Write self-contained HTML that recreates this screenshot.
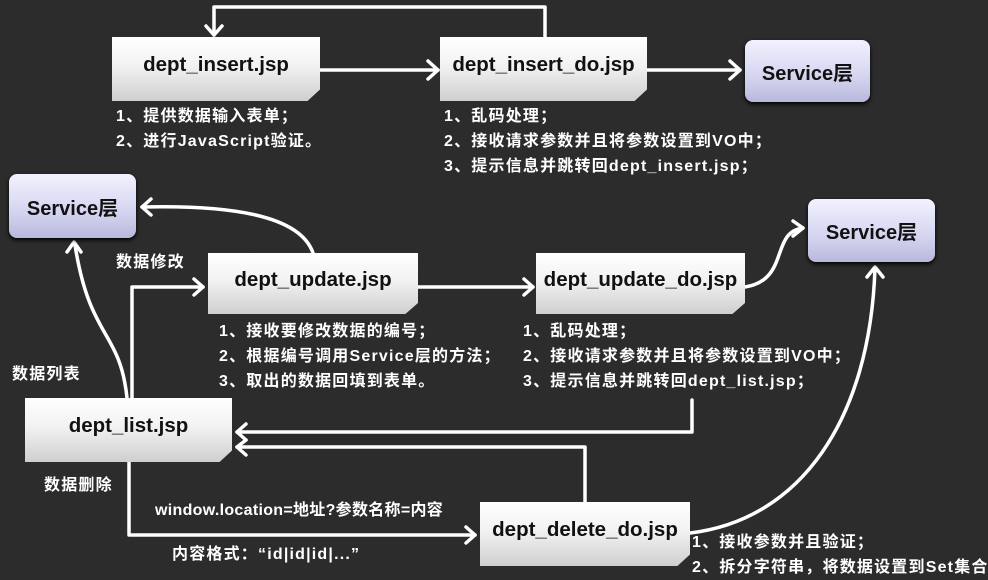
<!DOCTYPE html>
<html><head><meta charset="utf-8"><style>
body{margin:0;width:988px;height:579px;overflow:hidden;background:#2c2c2c;font-family:"Liberation Sans","Noto Sans CJK SC",sans-serif;position:relative}
.b{position:absolute;background:linear-gradient(#ffffff,#f2f2f2 45%,#cfcfcf);color:#111;font-weight:bold;font-size:20.5px;display:flex;align-items:center;justify-content:center;box-sizing:border-box;padding-bottom:8px;clip-path:polygon(0 0,100% 0,100% 82%,94% 100%,0 100%)}
.s{position:absolute;background:linear-gradient(#f2f2ff,#d4d4f0 60%,#b8b8dc);color:#111;font-weight:bold;font-size:20px;border-radius:8px;display:flex;align-items:center;justify-content:center;box-shadow:0 2px 4px #000}
.t{position:absolute;color:#fff;font-weight:bold;font-size:16px;letter-spacing:1.2px;line-height:25px;white-space:nowrap}
svg{position:absolute;left:0;top:0}
</style></head><body>
<svg width="988" height="579" fill="none" stroke="#fff" stroke-width="3.5" stroke-linejoin="round" stroke-linecap="round">
<path d="M545 37V7H214V35"/><path d="M206 26l8 9 8-9"/>
<path d="M320 70H438"/><path d="M428 61l10 9-10 9"/>
<path d="M647 70H740"/><path d="M730 61l10 9-10 9"/>
<path d="M313 253C300 215 230 205 142 207"/><path d="M151 199l-9 8 9 8"/>
<path d="M127 398C120 330 90 340 75 245"/><path d="M67 252l7-10 7 10"/>
<path d="M132 398V287H203"/><path d="M194 279l9 8-9 8"/>
<path d="M418 287H533"/><path d="M524 279l9 8-9 8"/>
<path d="M745 287C790 280 770 232 803 228"/><path d="M793 221l10 7-10 8"/>
<path d="M692 400V432H237"/><path d="M246 424l-9 8 9 8"/>
<path d="M585 502V447H237"/><path d="M246 440l-9 7 9 8"/>
<path d="M690 533C800 520 870 420 875 268"/><path d="M867 277l8-10 8 10"/>
<path d="M129 462V535H475"/><path d="M466 527l9 8-9 8"/>
</svg>
<div class="b" style="left:112px;top:37px;width:208px;height:64px">dept_insert.jsp</div>
<div class="b" style="left:440px;top:37px;width:207px;height:64px">dept_insert_do.jsp</div>
<div class="s" style="left:745px;top:40px;width:125px;height:62px">Service层</div>
<div class="s" style="left:9px;top:174px;width:127px;height:64px">Service层</div>
<div class="s" style="left:808px;top:199px;width:127px;height:63px">Service层</div>
<div class="b" style="left:208px;top:253px;width:210px;height:61px">dept_update.jsp</div>
<div class="b" style="left:536px;top:253px;width:209px;height:61px">dept_update_do.jsp</div>
<div class="b" style="left:25px;top:398px;width:207px;height:64px">dept_list.jsp</div>
<div class="b" style="left:480px;top:502px;width:210px;height:64px">dept_delete_do.jsp</div>
<div class="t" style="left:116px;top:104px">1、提供数据输入表单；<br>2、进行JavaScript验证。</div>
<div class="t" style="left:444px;top:104px">1、乱码处理；<br>2、接收请求参数并且将参数设置到VO中；<br>3、提示信息并跳转回dept_insert.jsp；</div>
<div class="t" style="left:116px;top:250px">数据修改</div>
<div class="t" style="left:219px;top:319px">1、接收要修改数据的编号；<br>2、根据编号调用Service层的方法；<br>3、取出的数据回填到表单。</div>
<div class="t" style="left:523px;top:319px">1、乱码处理；<br>2、接收请求参数并且将参数设置到VO中；<br>3、提示信息并跳转回dept_list.jsp；</div>
<div class="t" style="left:12px;top:362px">数据列表</div>
<div class="t" style="left:44px;top:473px">数据删除</div>
<div class="t" style="left:155px;top:498px;letter-spacing:0.3px">window.location=地址?参数名称=内容</div>
<div class="t" style="left:172px;top:542px">内容格式：“id|id|id|...”</div>
<div class="t" style="left:692px;top:530px">1、接收参数并且验证；<br>2、拆分字符串，将数据设置到Set集合</div>
</body></html>
